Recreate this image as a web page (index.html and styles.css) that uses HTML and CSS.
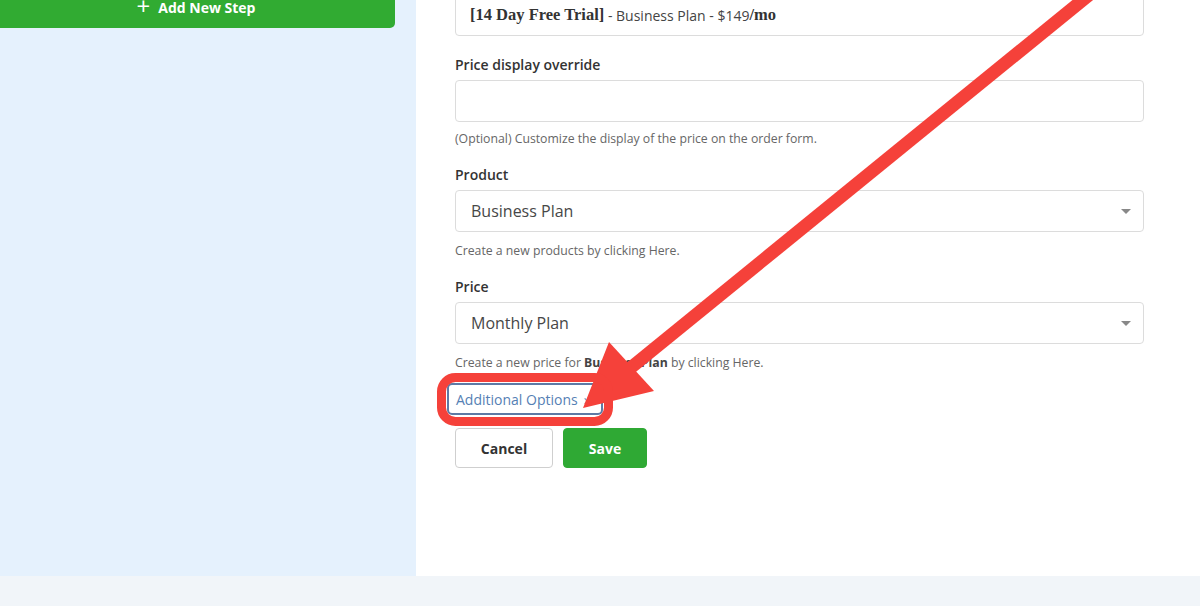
FILE: index.html
```html
<!DOCTYPE html>
<html>
<head>
<meta charset="utf-8">
<link rel="stylesheet" href="styles.css">
</head>
<body>
<div class="page">
  <div class="layout">
    <aside class="sidebar">
      <button class="add-step"><span class="plus">+</span> Add New Step</button>
    </aside>
    <main class="main">
      <div class="form">
        <div class="input first"><span class="serif">[14 Day Free Trial]</span> - Business Plan - $149<span class="serif">/mo</span></div>
        <div class="field">
          <label class="label">Price display override</label>
          <div class="input"></div>
          <p class="help">(Optional) Customize the display of the price on the order form.</p>
        </div>
        <div class="field">
          <label class="label">Product</label>
          <div class="input select">Business Plan<span class="caret"></span></div>
          <p class="help">Create a new products by clicking Here.</p>
        </div>
        <div class="field">
          <label class="label">Price</label>
          <div class="input select">Monthly Plan<span class="caret"></span></div>
          <p class="help">Create a new price for <b>Business Plan</b> by clicking Here.</p>
        </div>
        <div class="more"><a class="more-link">Additional Options <span class="chev">&#8250;</span></a></div>
        <div class="actions">
          <button class="btn cancel">Cancel</button>
          <button class="btn save">Save</button>
        </div>
      </div>
    </main>
  </div>
  <div class="footer"></div>
  <svg class="annot" width="1200" height="606" viewBox="0 0 1200 606">
    <line x1="1100" y1="-14" x2="628" y2="370" stroke="#f5413a" stroke-width="13"/>
    <polygon points="583,408 609,342 654,391" fill="#f5413a"/>
    <rect x="441.5" y="377.5" width="167" height="44" rx="14" fill="none" stroke="#f5413a" stroke-width="9"/>
  </svg>
</div>
</body>
</html>
```

FILE: styles.css
```css
* { box-sizing: border-box; }
html, body { margin: 0; padding: 0; }
body {
  font-family: "Open Sans", "Noto Sans", sans-serif;
  color: #333;
  background: #f1f5f9;
}
.page {
  position: relative;
  width: 1200px;
  height: 606px;
  overflow: hidden;
}
.layout {
  display: flex;
  height: 576px;
}
.sidebar {
  width: 416px;
  background: #e5f1fd;
  padding-right: 21px;
}
.add-step {
  display: flex;
  align-items: center;
  justify-content: center;
  gap: 8px;
  width: 100%;
  height: 42px;
  margin-top: -14px;
  border: none;
  border-radius: 0 0 5px 0;
  background: #31ab32;
  color: #fff;
  font-family: "Open Sans", sans-serif;
  font-weight: 700;
  font-size: 14px;
  padding: 0 3px 0 0;
}
.plus {
  font-size: 24px;
  font-weight: 400;
  line-height: 1;
  margin-top: -2px;
}
.main {
  flex: 1;
  background: #fff;
  padding: 0 56px 0 39px;
}
.form {
  display: flex;
  flex-direction: column;
  margin-top: -6px;
}
.input {
  height: 42px;
  border: 1px solid #dcdcdc;
  border-radius: 4px;
  background: #fff;
  display: flex;
  align-items: center;
  padding: 0 15px;
  font-size: 15.5px;
  color: #3a3a3a;
}
.input.first {
  font-size: 14px;
  padding-left: 14px;
  margin-bottom: 19px;
  white-space: pre;
  color: #444;
}
.serif {
  font-family: "Liberation Serif", serif;
  font-weight: 700;
  font-size: 16.5px;
  color: #333;
}
.input.select {
  justify-content: space-between;
  font-size: 16px;
  color: #474747;
}
.caret {
  width: 0;
  height: 0;
  border-left: 5px solid transparent;
  border-right: 5px solid transparent;
  border-top: 5px solid #888;
  margin-right: -3px;
}
.field {
  display: flex;
  flex-direction: column;
}
.label {
  font-size: 14px;
  font-weight: 600;
  line-height: 20px;
  color: #333;
  margin-bottom: 5px;
}
.help {
  margin: 7px 0 16px;
  font-size: 12.25px;
  line-height: 20px;
  color: #666;
}
.help b { color: #444; font-weight: 700; }
.field:nth-child(3) .help, .field:nth-child(4) .help { margin-top: 9px; }
.field:nth-child(4) .help { margin-bottom: 10px; }
.more {
  display: flex;
  margin-left: -8px;
}
.more-link {
  display: inline-flex;
  align-items: center;
  height: 32px;
  padding: 0 8px 0 7px;
  border: 2px solid #5d7aa5;
  border-radius: 5px;
  color: #5580b4;
  font-size: 14px;
  width: 156px;
  white-space: nowrap;
}
.chev { margin-left: 6px; color: #5580b4; }
.actions {
  display: flex;
  gap: 10px;
  margin-top: 13px;
}
.btn {
  height: 40px;
  border-radius: 4px;
  font-family: "Open Sans", sans-serif;
  font-weight: 700;
  font-size: 14px;
}
.cancel {
  width: 98px;
  background: #fff;
  border: 1px solid #cfcfcf;
  color: #333;
}
.save {
  width: 84px;
  background: #2fa934;
  border: 1px solid #2fa934;
  color: #fff;
}
.footer {
  height: 30px;
  background: #f1f5f9;
}
.annot {
  position: absolute;
  left: 0;
  top: 0;
  pointer-events: none;
}
```
